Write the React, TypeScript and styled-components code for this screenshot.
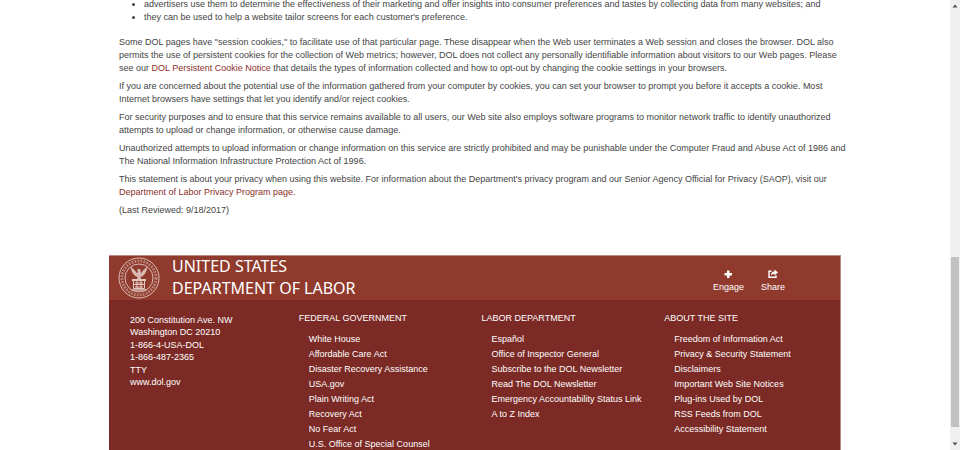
import React from "react";
import styled, { createGlobalStyle } from "styled-components";

const GlobalStyle = createGlobalStyle`
  * { box-sizing: border-box; }
  body {
    margin: 0;
    background: #fff;
    color: #444;
    font: 9px/13px "Liberation Sans", Arial, sans-serif;
  }
  a { color: #8a2f2a; text-decoration: none; }
  p, h2, h3, ul { margin: 0; padding: 0; }
`;

const Viewport = styled.div`
  display: flex;
  height: 100vh;
  overflow: hidden;
`;

const Page = styled.div`
  flex: 1;
  min-width: 0;
  overflow: hidden;
`;

const Container = styled.div`
  max-width: 732px;
  margin: 0 auto;
`;

const Article = styled.main`
  display: flex;
  flex-direction: column;
  gap: 5px;
  padding: 0 0 38px 10px;
  margin: -2px -5px 0 0;
`;

const Bullets = styled.ul`
  padding-left: 25px;
  margin-bottom: 7px;
`;

const Footer = styled.footer`
  background: #7b2a25;
  color: #fff;
  border-right: 1px solid #b98a83;
`;

const Banner = styled.div`
  display: flex;
  align-items: center;
  height: 45px;
  padding: 0 55px 0 9px;
  background: #8f3a2d;
  border-top: 1px solid #b98a83;
`;

const Seal = styled.svg`
  width: 42px;
  height: 42px;
  flex: none;
`;

const Department = styled.h2`
  flex: 1;
  margin-left: 12px;
  padding-bottom: 2px;
  font: 400 16px/22px "Noto Sans", "Open Sans", sans-serif;
`;

const Actions = styled.div`
  display: flex;
  gap: 17px;
  padding-top: 6px;
`;

const Action = styled.button`
  display: flex;
  flex-direction: column;
  align-items: center;
  gap: 2px;
  padding: 0;
  border: 0;
  background: none;
  color: #fff;
  font: inherit;
`;

const ActionIcon = styled.svg`
  width: 10px;
  height: 10px;
`;

const Columns = styled.div`
  display: grid;
  grid-template-columns: repeat(4, 1fr);
  padding: 12px 0;
`;

const Address = styled.address`
  display: flex;
  flex-direction: column;
  gap: 1px;
  padding: 2px 0 0 21px;
  font-style: normal;
  line-height: 12px;
`;

const Lines = styled.div`
  display: flex;
  flex-direction: column;
`;

const Column = styled.nav`
  padding-left: 7px;
`;

const ColumnTitle = styled.h3`
  margin-bottom: 7px;
  font: inherit;
`;

const LinkList = styled.ul`
  padding-left: 10px;
  list-style: none;
  line-height: 15px;
`;

const FooterLink = styled.a`
  color: #fff;
  white-space: nowrap;
`;

const ScrollBar = styled.div`
  display: flex;
  flex-direction: column;
  width: 10px;
  flex: none;
  background: #f0f0f0;
`;

const Track = styled.div`
  flex: 1;
  display: flex;
  flex-direction: column;
  justify-content: flex-end;
  padding: 0 1px 11px;
`;

const Thumb = styled.div`
  height: 41%;
  background: #c1c1c1;
`;

const ScrollButton = styled.button`
  display: flex;
  align-items: center;
  justify-content: center;
  height: 12px;
  padding: 0;
  border: 0;
  background: none;
`;

const columns = [
  {
    title: "FEDERAL GOVERNMENT",
    links: [
      "White House",
      "Affordable Care Act",
      "Disaster Recovery Assistance",
      "USA.gov",
      "Plain Writing Act",
      "Recovery Act",
      "No Fear Act",
      "U.S. Office of Special Counsel",
    ],
  },
  {
    title: "LABOR DEPARTMENT",
    links: [
      "Español",
      "Office of Inspector General",
      "Subscribe to the DOL Newsletter",
      "Read The DOL Newsletter",
      "Emergency Accountability Status Link",
      "A to Z Index",
    ],
  },
  {
    title: "ABOUT THE SITE",
    links: [
      "Freedom of Information Act",
      "Privacy & Security Statement",
      "Disclaimers",
      "Important Web Site Notices",
      "Plug-ins Used by DOL",
      "RSS Feeds from DOL",
      "Accessibility Statement",
    ],
  },
];

function DepartmentSeal() {
  return (
    <Seal viewBox="0 0 42 42" fill="none" stroke="#e3c8c2" aria-hidden="true">
      <circle cx="21" cy="21" r="20" strokeWidth=".9" />
      <circle cx="21" cy="21" r="17" strokeWidth="3" strokeDasharray="1.8 1.2" opacity=".5" />
      <circle cx="21" cy="21" r="14" strokeWidth=".9" />
      <g fill="#e3c8c2" stroke="none">
        <path d="M12.5 9.5 Q13 13 14.5 16 Q16.5 19 19.5 20 L19 22 H23 L22.5 20 Q25.5 19 27.5 16 Q29 13 29.5 9.5 L25.5 13 Q24 14.5 23 16.5 L22.5 13 Q22 11.5 20 12 L18.8 13.2 L20 13.8 L19 16.5 Q18 14.5 16.5 13 Z" opacity=".9" />
        <rect x="14" y="22" width="14" height="2" />
      </g>
      <path d="M15.5 24 V31.5 H26.5 V24 M15.5 27.5 H26.5 M19 24 V31.5 M23 24 V31.5 M17 26 H25 M17 30 H25" strokeWidth="1" />
      <path d="M13.5 33 H28.5" strokeWidth="1.4" />
    </Seal>
  );
}

function PlusIcon() {
  return (
    <ActionIcon viewBox="0 0 10 10" aria-hidden="true">
      <path d="M4 1.5h2.5V4H9v2.5H6.5V9H4V6.500H1.500V4H4z" fill="#fff" />
    </ActionIcon>
  );
}

function ShareIcon() {
  return (
    <ActionIcon viewBox="0 0 10 10" aria-hidden="true">
      <path d="M3.5 2.3H1V8.3H8V6.6" fill="none" stroke="#fff" strokeWidth="1.4" />
      <path d="M6.5 .6 L10 3.5 L6.5 6.4 V4.8 Q4.4 4.6 3 6.5 Q3.1 2.5 6.5 2.2 Z" fill="#fff" />
    </ActionIcon>
  );
}

export default function App() {
  return (
    <>
      <GlobalStyle />
      <Viewport>
        <Page>
          <Container>
            <Article>
              <Bullets>
                <li>
                  advertisers use them to determine the effectiveness of their marketing and offer insights into
                  consumer preferences and tastes by collecting data from many websites; and
                </li>
                <li>they can be used to help a website tailor screens for each customer's preference.</li>
              </Bullets>
              <p>
                Some DOL pages have "session cookies," to facilitate use of that particular page. These disappear when
                the Web user terminates a Web session and closes the browser. DOL also permits the use of persistent
                cookies for the collection of Web metrics; however, DOL does not collect any personally identifiable
                information about visitors to our Web pages. Please see our{" "}
                <a href="#cookies">DOL Persistent Cookie Notice</a> that details the types of information collected
                and how to opt-out by changing the cookie settings in your browsers.
              </p>
              <p>
                If you are concerned about the potential use of the information gathered from your computer by
                cookies, you can set your browser to prompt you before it accepts a cookie. Most Internet browsers
                have settings that let you identify and/or reject cookies.
              </p>
              <p>
                For security purposes and to ensure that this service remains available to all users, our Web site
                also employs software programs to monitor network traffic to identify unauthorized attempts to upload
                or change information, or otherwise cause damage.
              </p>
              <p>
                Unauthorized attempts to upload information or change information on this service are strictly
                prohibited and may be punishable under the Computer Fraud and Abuse Act of 1986 and The National
                Information Infrastructure Protection Act of 1996.
              </p>
              <p>
                This statement is about your privacy when using this website. For information about the Department's
                privacy program and our Senior Agency Official for Privacy (SAOP), visit our{" "}
                <a href="#privacy">Department of Labor Privacy Program page.</a>
              </p>
              <p>(Last Reviewed: 9/18/2017)</p>
            </Article>
            <Footer>
              <Banner>
                <DepartmentSeal />
                <Department>
                  UNITED STATES
                  <br />
                  DEPARTMENT OF LABOR
                </Department>
                <Actions>
                  <Action type="button">
                    <PlusIcon />
                    Engage
                  </Action>
                  <Action type="button">
                    <ShareIcon />
                    Share
                  </Action>
                </Actions>
              </Banner>
              <Columns>
                <Address>
                  <Lines>
                    <span>200 Constitution Ave. NW</span>
                    <span>Washington DC 20210</span>
                  </Lines>
                  <Lines>
                    <span>1-866-4-USA-DOL</span>
                    <span>1-866-487-2365</span>
                  </Lines>
                  <Lines>
                    <FooterLink href="#tty">TTY</FooterLink>
                    <FooterLink href="#home">www.dol.gov</FooterLink>
                  </Lines>
                </Address>
                {columns.map((column) => (
                  <Column key={column.title} aria-label={column.title}>
                    <ColumnTitle>{column.title}</ColumnTitle>
                    <LinkList>
                      {column.links.map((link) => (
                        <li key={link}>
                          <FooterLink href="#link">{link}</FooterLink>
                        </li>
                      ))}
                    </LinkList>
                  </Column>
                ))}
              </Columns>
            </Footer>
          </Container>
        </Page>
        <ScrollBar>
          <ScrollButton type="button" aria-label="Scroll up">
            <svg width="6" height="4" viewBox="0 0 6 4">
              <path d="M0.5 3.5 L3 .5 L5.5 3.5z" fill="#505050" />
            </svg>
          </ScrollButton>
          <Track>
            <Thumb />
          </Track>
          <ScrollButton type="button" aria-label="Scroll down">
            <svg width="6" height="4" viewBox="0 0 6 4">
              <path d="M0.5 .5 L3 3.5 L5.5 .5z" fill="#505050" />
            </svg>
          </ScrollButton>
        </ScrollBar>
      </Viewport>
    </>
  );
}
